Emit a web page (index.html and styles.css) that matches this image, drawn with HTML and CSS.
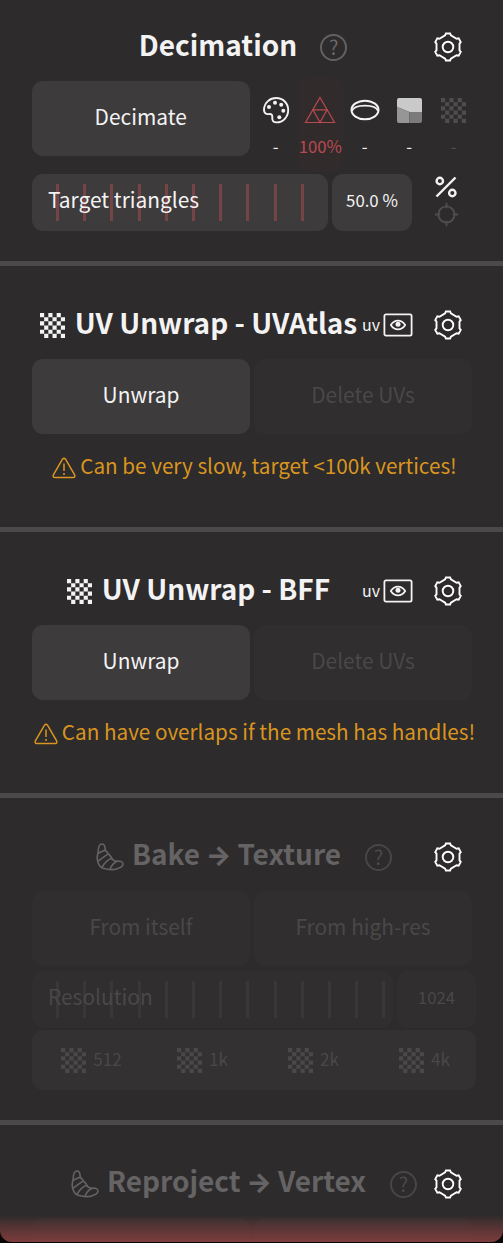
FILE: index.html
```html
<!DOCTYPE html>
<html lang="en">
<head>
<meta charset="utf-8">
<title>Mesh tools</title>
<link rel="stylesheet" href="styles.css">
</head>
<body>
<svg class="sprite" aria-hidden="true">
  <symbol id="gear" viewBox="-15 -15 30 30"><path d="M-2.1-13.5H2.1L2.9-11.6 8.6-8.3 10.65-8.6 12.75-4.9 11.5-3.3V3.3L12.75 4.9 10.65 8.6 8.6 8.3 2.9 11.6 2.1 13.5H-2.1L-2.9 11.6-8.6 8.3-10.65 8.6-12.75 4.9-11.5 3.3V-3.3L-12.75-4.9-10.65-8.6-8.6-8.3-2.9-11.6Z" fill="none" stroke="currentColor" stroke-width="1.9"/><circle r="5.3" fill="none" stroke="currentColor" stroke-width="1.9"/></symbol>
  <symbol id="checker" viewBox="0 0 6 6"><path fill="currentColor" d="M0 0h1v1H0zM2 0h1v1H2zM4 0h1v1H4zM1 1h1v1H1zM3 1h1v1H3zM5 1h1v1H5zM0 2h1v1H0zM2 2h1v1H2zM4 2h1v1H4zM1 3h1v1H1zM3 3h1v1H3zM5 3h1v1H5zM0 4h1v1H0zM2 4h1v1H2zM4 4h1v1H4zM1 5h1v1H1zM3 5h1v1H3zM5 5h1v1H5z"/></symbol>
  <symbol id="eye" viewBox="0 0 30 24"><g fill="none" stroke="currentColor" stroke-width="1.8"><rect x="1.4" y="1.4" width="27.2" height="21.2" rx="1.6"/><path d="M7.8 12C11.5 6.2 18.500 6.200 22.200 12C18.500 17.800 11.500 17.800 7.800 12Z" stroke-linejoin="round"/></g><circle cx="15" cy="11.300" r="2.500" fill="currentColor"/></symbol>
  <symbol id="warn" viewBox="0 0 24 22"><path d="M10.500 2.200Q12 .2 13.500 2.200L22.600 17.800Q23.600 20.600 21 20.600H3Q.4 20.600 1.400 17.800Z" fill="none" stroke="currentColor" stroke-width="1.500"/><path d="M12 6.500V14M12 16V18" stroke="currentColor" stroke-width="1.500"/></symbol>
  <symbol id="croissant" viewBox="0 0 28 28"><path d="M6 1C3.500 1 2.200 5 2.200 9C1 13 1 17 2 19.500C3.500 24 6 25.500 9.500 25.700C14 27 20 27 22 25.300C25 24.500 27 23 27 20.700C26.800 18.500 24 17.800 20.500 18.200C18.500 18 16.500 17.500 15.700 15C14.500 12 12.500 11.800 11.500 9.500C9.500 8.500 9 7.500 9 5C8.800 2.500 8 1 6 1ZM2.200 10.300L8.700 7.300M1.700 18.300L12.500 10.600M6 24.300C8.500 20 12 16.500 16 15M14 26C15.500 22.500 18 19.500 21 18.200" fill="none" stroke="currentColor" stroke-width="1.600" stroke-linejoin="round"/></symbol>
  <symbol id="palette" viewBox="0 0 28 28"><path d="M4.500 17.800C2 17 1.900 15 2 13.200C2.500 6.500 8 2 14.200 2C21 2 26.200 7.300 26.200 14C26.200 21 21 26.400 14.500 26.400C11.500 26.400 10.200 25 10.300 22.300C10.400 19.500 10.200 18 8 18C6.500 18.200 5.500 18.200 4.500 17.800Z" fill="none" stroke="currentColor" stroke-width="1.900"/><g fill="currentColor"><circle cx="7" cy="11" r="2"/><circle cx="13" cy="6.700" r="2"/><circle cx="19.200" cy="8.700" r="2"/><circle cx="21.300" cy="14.700" r="2"/><circle cx="17.300" cy="21.200" r="2"/></g></symbol>
  <symbol id="tris" viewBox="0 0 32 28"><path d="M16 1.500L30.500 26.500H1.500ZM9 13.800H23L16 26.500Z" fill="none" stroke="currentColor" stroke-width="1.200"/></symbol>
  <symbol id="ring" viewBox="0 0 30 22"><g fill="none" stroke="currentColor"><ellipse cx="15" cy="11" rx="13.500" ry="9.300" stroke-width="2"/><path d="M2 12C4 4.800 26 4.800 28 12" stroke-width="1.700"/></g></symbol>
  <symbol id="shade" viewBox="0 0 25 25"><path fill="#cacaca" d="M2 0H23Q25 0 25 2V14H12.500L0 9V2Q0 0 2 0Z"/><path fill="#969696" d="M0 9L12.500 14V25H2Q0 25 0 23Z"/><path fill="#7b7b7b" d="M12.500 14H25V23Q25 25 23 25H12.500Z"/></symbol>
  <symbol id="percent" viewBox="0 0 24 22"><g fill="none" stroke="currentColor" stroke-width="2.400"><path d="M2.500 20.500L21.500 1.500"/><circle cx="5.800" cy="5" r="3.200"/><circle cx="18.300" cy="17" r="3.200"/></g></symbol>
  <symbol id="target" viewBox="-12 -12 24 24"><g fill="none" stroke="currentColor" stroke-width="1.800"><circle r="7.800"/><path d="M0-11.200V-6M0 11.200V6M-11.200 0H-6M11.200 0H6"/></g></symbol>
</svg>

<main class="panel">
  <section class="tool tool--first">
    <header class="head">
      <div class="lead"><h2 class="title">Decimation</h2><span class="help">?</span></div>
      <svg class="gear"><use href="#gear"/></svg>
    </header>
    <div class="row">
      <button class="btn">Decimate</button>
      <div class="channels">
        <div class="channel"><svg width="28" height="28"><use href="#palette"/></svg><span>-</span></div>
        <div class="channel channel--on"><svg width="32" height="28"><use href="#tris"/></svg><span>100%</span></div>
        <div class="channel"><svg width="30" height="22"><use href="#ring"/></svg><span>-</span></div>
        <div class="channel"><svg width="25" height="25"><use href="#shade"/></svg><span>-</span></div>
        <div class="channel channel--off"><svg width="25" height="25"><use href="#checker"/></svg><span>-</span></div>
      </div>
    </div>
    <div class="row row--slider">
      <div class="slider">
        <div class="ticks"><i></i><i></i><i></i><i></i><i></i><i></i><i></i><i></i><i></i><i></i></div>
        <span class="slider-label">Target triangles</span>
      </div>
      <div class="value">50.0 %</div>
      <div class="modes"><svg width="24" height="22"><use href="#percent"/></svg><svg class="mode-off" width="25" height="25"><use href="#target"/></svg></div>
    </div>
  </section>

  <section class="tool">
    <header class="head head--uv">
      <div class="lead"><svg class="mark"><use href="#checker"/></svg><h2 class="title">UV Unwrap - UVAtlas</h2></div>
      <div class="uv"><span>uv</span><svg width="30" height="24"><use href="#eye"/></svg></div>
      <svg class="gear"><use href="#gear"/></svg>
    </header>
    <div class="row"><button class="btn">Unwrap</button><button class="btn btn--off">Delete UVs</button></div>
    <p class="warning"><svg width="24" height="22"><use href="#warn"/></svg><span>Can be very slow, target &lt;100k vertices!</span></p>
  </section>

  <section class="tool">
    <header class="head head--uv">
      <div class="lead"><svg class="mark"><use href="#checker"/></svg><h2 class="title">UV Unwrap - BFF</h2></div>
      <div class="uv"><span>uv</span><svg width="30" height="24"><use href="#eye"/></svg></div>
      <svg class="gear"><use href="#gear"/></svg>
    </header>
    <div class="row"><button class="btn">Unwrap</button><button class="btn btn--off">Delete UVs</button></div>
    <p class="warning"><svg width="24" height="22"><use href="#warn"/></svg><span>Can have overlaps if the mesh has handles!</span></p>
  </section>

  <section class="tool tool--bake">
    <header class="head head--off">
      <div class="lead"><svg class="croissant"><use href="#croissant"/></svg><h2 class="title">Bake <span class="arrow">→</span> Texture</h2><span class="help">?</span></div>
      <svg class="gear"><use href="#gear"/></svg>
    </header>
    <div class="row"><button class="btn btn--off">From itself</button><button class="btn btn--off">From high-res</button></div>
    <div class="row row--resolution">
      <div class="slider slider--off">
        <div class="ticks"><i></i><i></i><i></i><i></i><i></i><i></i><i></i><i></i><i></i><i></i><i></i><i></i><i></i></div>
        <span class="slider-label">Resolution</span>
      </div>
      <div class="value value--off">1024</div>
    </div>
    <div class="presets">
      <div class="preset"><svg class="mark"><use href="#checker"/></svg><span>512</span></div>
      <div class="preset"><svg class="mark"><use href="#checker"/></svg><span>1k</span></div>
      <div class="preset"><svg class="mark"><use href="#checker"/></svg><span>2k</span></div>
      <div class="preset"><svg class="mark"><use href="#checker"/></svg><span>4k</span></div>
    </div>
  </section>

  <section class="tool tool--last">
    <header class="head head--off">
      <div class="lead"><svg class="croissant"><use href="#croissant"/></svg><h2 class="title">Reproject <span class="arrow">→</span> Vertex</h2><span class="help">?</span></div>
      <svg class="gear"><use href="#gear"/></svg>
    </header>
    <div class="row"><button class="btn btn--off"></button><button class="btn btn--off"></button></div>
  </section>
  <div class="edge"></div>
</main>
</body>
</html>
```
FILE: styles.css
```css
* { box-sizing: border-box; }
body { margin: 0; background: #2d2b2c; color: #f4f3f4; font-family: "Noto Sans CJK SC", "Noto Sans", sans-serif; font-size: 20.9px; }
svg { display: block; flex: none; }
.sprite { position: absolute; width: 0; height: 0; }
.panel { position: relative; height: 1243px; overflow: hidden; }

.tool { height: 266px; padding: 37px 27px 0 32px; border-bottom: 5px solid #4b494a; }
.tool--first { padding-top: 25px; }
.tool--bake { height: 327px; }
.tool--last { border-bottom: 0; }

.head { display: flex; align-items: center; height: 44px; margin-bottom: 12px; padding: 0 13px 0 21px; }
.head--uv { padding-left: 3px; }
.lead { display: flex; flex: 1; align-items: center; justify-content: center; white-space: nowrap; }
.head--uv .lead { flex: none; width: 327px; }
.title { margin: -6px 0 0; font-size: 28px; font-weight: 700; line-height: 44px; }
.mark { width: 25px; height: 25px; }
.head .mark { margin-right: 10px; }
.gear { width: 30px; height: 30px; margin-left: auto; color: #fff; }
.help { width: 27px; height: 27px; margin-left: 23px; border: 2px solid #636162; border-radius: 50%; color: #6a6869; font-size: 20px; line-height: 22px; text-align: center; }
.head--off { padding-left: 23px; }
.head--off .lead { color: #656364; }
.head--off .help { margin-left: 24px; border-color: #484647; color: #4c4a4b; }
.croissant { width: 28px; height: 28px; margin-right: 8px; }
.arrow { margin: 0 -0.5px; font-family: Inter, sans-serif; font-size: 27px; font-weight: 800; }
.uv { display: flex; align-items: center; gap: 3px; font-size: 16px; line-height: 24px; }
.uv span { margin-top: -3px; }

.row { display: flex; gap: 4px; }
.btn { width: 218px; height: 75px; padding: 0 0 6px; border: 0; border-radius: 11px; background: #3d3b3c; color: inherit; font: inherit; }
.btn--off { background: #302e2f; color: #4a4849; }

.channels { display: flex; height: 93px; margin-top: -3px; }
.channel { display: grid; grid-template-rows: 64px 16px; align-items: center; justify-items: center; width: 44.5px; border-radius: 10px; font-size: 16.7px; line-height: 16px; }
.channel span { margin-top: -8px; }
.channel--on { background: #312b2c; color: #b94a50; }
.channel--off { color: #4f4d4e; }

.row--slider { margin-top: 3px; }
.slider { position: relative; width: 296px; height: 57px; padding: 10px 0 0 24px; border-radius: 11px; background: #3d3b3c; }
.ticks { display: flex; gap: 24.2px; }
.ticks i { flex: none; width: 3px; height: 37px; background: #744446; }
.slider-label { position: absolute; left: 16px; top: 0; line-height: 51px; }
.value { width: 80px; height: 57px; border-radius: 11px; background: #3d3b3c; font-size: 16.8px; line-height: 53px; text-align: center; }
.modes { display: flex; flex-direction: column; align-items: center; gap: 4px; width: 26px; margin: 2px 0 0 17px; }
.mode-off { color: #4f4d4e; }

.warning { display: flex; align-items: center; justify-content: center; gap: 4px; height: 44px; margin: 12px 0 0 1px; color: #d9951f; font-size: 20.7px; line-height: 44px; white-space: nowrap; }
.warning span { margin-top: -6px; }

.row--resolution { margin-top: 5px; }
.slider--off { width: 361px; background: #302e2f; color: #4a4849; }
.slider--off .ticks i { background: #393738; }
.value--off { width: 79px; background: #302e2f; color: #4a4849; }
.presets { display: grid; grid-template-columns: repeat(4, 111px); width: 444px; height: 60px; margin-top: 2px; border-radius: 11px; background: #333132; color: #4a4849; font-size: 17.2px; }
.preset { display: flex; align-items: center; justify-content: center; gap: 7px; padding-left: 8px; }
.preset span { margin-top: -4px; }

.edge { position: absolute; inset: auto 0 1px; height: 27px; border-radius: 0 0 12px 12px; background: linear-gradient(#7d3c3c00, #7d3c3c66 35%, #7d3c3c); box-shadow: 0 14px 0 #080606; }
```
